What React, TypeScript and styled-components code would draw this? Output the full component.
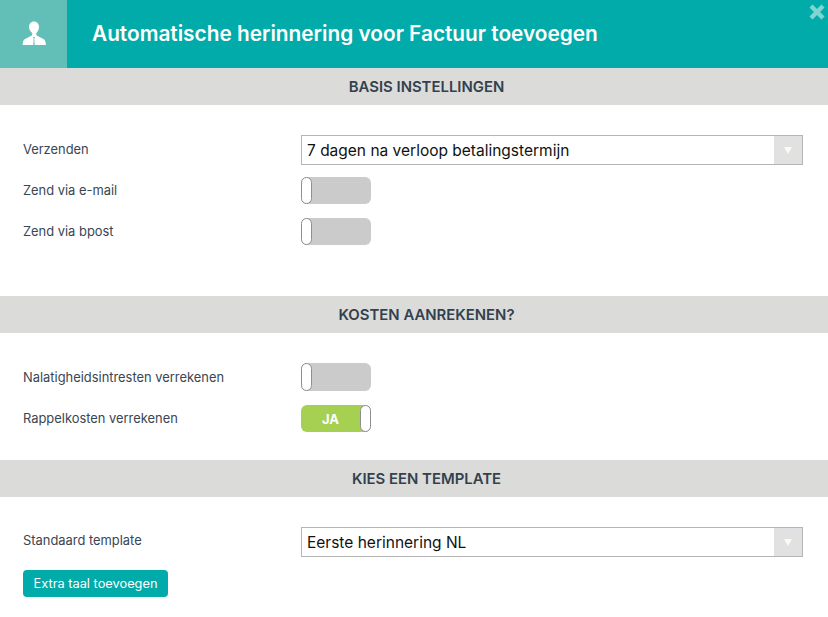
import React from "react";
import styled, { createGlobalStyle } from "styled-components";

const Global = createGlobalStyle`
  html, body { margin: 0; padding: 0; background: #fff; }
  body { font-family: "Inter", "Lato", sans-serif; color: #3a4653; }
  * { box-sizing: border-box; }
`;
const Page = styled.div`width: 828px; height: 617px; overflow: hidden; background: #fff;`;
const Header = styled.header`
  position: relative; height: 68px; background: #00aba9; display: flex; align-items: center;
`;
const IconBox = styled.div`
  width: 67px; height: 68px; padding-bottom: 2px; background: #62bfb7; display: flex; align-items: center; justify-content: center;
`;
const Title = styled.h1`
  margin: -2px 0 0 25px; font-size: 20.8px; font-weight: 600; color: #fff;
`;
const Close = styled.button`
  position: absolute; top: 3px; right: 2px; width: 18px; height: 18px; padding: 0; border: 0; background: none; display: flex;
`;
const SectionBar = styled.h2`
  margin: 0; height: 37px; padding-left: 25px; background: #dbdcda; display: flex; align-items: center; justify-content: center;
  font-size: 14.9px; font-weight: 600; color: #33414e;
`;
const SectionBody = styled.div<{ $bottom: number }>`
  padding: 30px 25px ${p => p.$bottom}px 23px; display: flex; flex-direction: column; gap: 14px;
`;
const Row = styled.div`display: flex; align-items: center;`;
const RowTight = styled(Row)`margin-top: -2px;`;
const Label = styled.label<{ $up?: number }>`
  width: 278px; flex: none; font-size: 12.9px; color: #3a4653; position: relative; top: ${p => -(p.$up ?? 0)}px;
`;
const Select = styled.div`
  flex: 1; height: 30px; border: 1px solid #b5b5b5; display: flex; align-items: center; justify-content: space-between;
  font-size: 15.5px; color: #111; padding-left: 5px; background: #fff;
`;
const SelectText = styled.span`padding-top: 1px;`;
const Arrow = styled.span`
  width: 28px; height: 28px; background: #e1e1e1; display: flex; align-items: center; justify-content: center;
`;
const Toggle = styled.div<{ $on?: boolean; $tall?: boolean }>`
  position: relative; width: 70px; height: ${p => (p.$tall ? 28 : 27)}px; border-radius: 6px; background: ${p => (p.$on ? "#a5d051" : "#cbcbcb")};
  color: #fff; font-size: 13px; font-weight: 700; display: flex; align-items: center; justify-content: center; padding-right: 11px;
`;
const Knob = styled.span<{ $on?: boolean }>`
  position: absolute; top: 0; bottom: 0; ${p => (p.$on ? "right: 0;" : "left: 0;")} width: 11px; border-radius: 6px;
  background: #fff; border: 1px solid #8e8e8e;
`;
const Button = styled.button`
  height: 27px; width: 145px; margin-top: -1px; border: 0; border-radius: 4px; background: #00aba9; color: #fff; font-family: inherit; font-size: 12.8px; padding: 0;
`;

const Chevron = () => (
  <svg width="8" height="7" viewBox="0 0 8 7"><path d="M0 0h8L4 7z" fill="#fbfbf4" /></svg>
);

const Sw = ({ on, tall }: { on?: boolean; tall?: boolean }) => (
  <Toggle $on={on} $tall={tall}>{on && "JA"}<Knob $on={on} /></Toggle>
);

export default function App() {
  return (
    <Page>
      <Global />
      <Header>
        <IconBox>
          <svg width="24" height="24" viewBox="0 0 24 24" fill="#fff">
            <path d="M12 0.5c3 0 5 2.3 5 5.6 0 2.5-1.1 4.6-2.7 6v1.3c0 .6.3 1 .9 1.3l5.7 3c1.5.8 2.3 1.6 2.6 3.2l.5 3.6H12.7l-.4-7 .7-1.5h-2l.7 1.5-.4 7H.5L1 20.900c.3-1.600 1.100-2.400 2.600-3.200l5.700-3c.6-.3.9-.7.9-1.300V12.100C8.600 10.700 7 8.600 7 6.100c0-3.300 2-5.600 5-5.600z" />
          </svg>
        </IconBox>
        <Title>Automatische herinnering voor Factuur toevoegen</Title>
        <Close aria-label="Sluiten">
          <svg width="18" height="18" viewBox="0 0 18 18">
            <path d="M3 3l12 12M15 3L3 15" stroke="#7fd5d1" strokeWidth="4.4" />
          </svg>
        </Close>
      </Header>

      <SectionBar>BASIS INSTELLINGEN</SectionBar>
      <SectionBody $bottom={51}>
        <Row>
          <Label $up={1}>Verzenden</Label>
          <Select><SelectText>7 dagen na verloop betalingstermijn</SelectText><Arrow><Chevron /></Arrow></Select>
        </Row>
        <RowTight><Label>Zend via e-mail</Label><Sw /></RowTight>
        <Row><Label>Zend via bpost</Label><Sw /></Row>
      </SectionBody>

      <SectionBar>KOSTEN AANREKENEN?</SectionBar>
      <SectionBody $bottom={28}>
        <Row><Label>Nalatigheidsintresten verrekenen</Label><Sw tall /></Row>
        <Row><Label>Rappelkosten verrekenen</Label><Sw on /></Row>
      </SectionBody>

      <SectionBar>KIES EEN TEMPLATE</SectionBar>
      <SectionBody $bottom={20}>
        <Row>
          <Label $up={2}>Standaard template</Label>
          <Select><SelectText>Eerste herinnering NL</SelectText><Arrow><Chevron /></Arrow></Select>
        </Row>
        <Row><Button>Extra taal toevoegen</Button></Row>
      </SectionBody>
    </Page>
  );
}
